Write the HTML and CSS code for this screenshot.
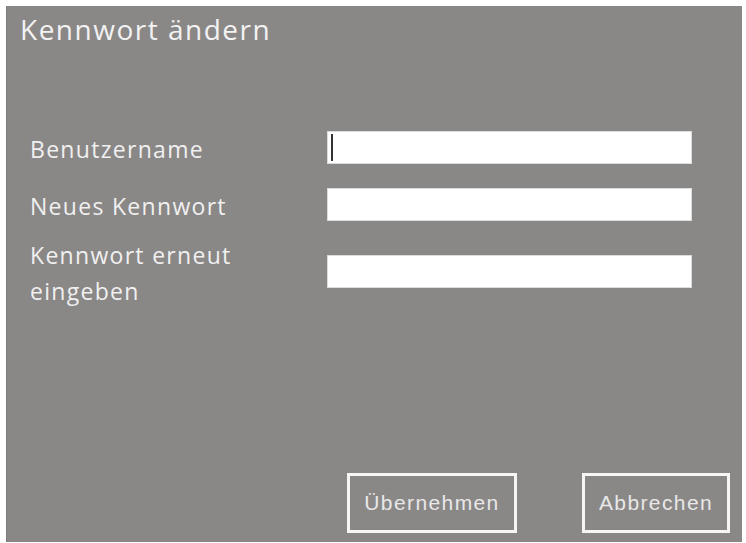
FILE: index.html
```html
<!DOCTYPE html>
<html lang="de">
<head>
    <meta charset="UTF-8">
    <meta name="viewport" content="width=device-width, initial-scale=1.0">
    <title>Kennwort ändern</title>
    <link rel="stylesheet" href="styles.css">
</head>
<body>
    <div class="dialog">
        <h1 class="title">Kennwort ändern</h1>
        <div class="form">
            <div class="row">
                <label class="label">Benutzername</label>
                <div class="field"><span class="caret"></span></div>
            </div>
            <div class="row">
                <label class="label">Neues Kennwort</label>
                <div class="field"></div>
            </div>
            <div class="row row-tall">
                <label class="label">Kennwort erneut<br>eingeben</label>
                <div class="field"></div>
            </div>
        </div>
        <div class="actions">
            <button class="btn btn-apply">Übernehmen</button>
            <button class="btn btn-cancel">Abbrechen</button>
        </div>
    </div>
</body>
</html>
```

FILE: styles.css
```css
body {
    margin: 0;
    background-color: #ffffff;
    font-family: "Open Sans", Lato, sans-serif;
}
.dialog {
    margin: 6px 0 0 6px;
    width: 736px;
    height: 536px;
    box-sizing: border-box;
    background-color: #8a8787;
    border-left: 1px solid #7d7a7a;
    display: flex;
    flex-direction: column;
}
.title {
    margin: 0;
    padding: 6px 0 0 13px;
    font-size: 28px;
    font-weight: normal;
    line-height: 34px;
    letter-spacing: 1.5px;
    color: #f2f2f2;
}
.form {
    margin-top: 82px;
    padding-left: 23px;
}
.row {
    display: flex;
    align-items: center;
}
.row + .row {
    margin-top: 18px;
}
.row + .row-tall {
    margin-top: 10px;
}
.label {
    width: 297px;
    font-size: 23px;
    line-height: 36px;
    letter-spacing: 1.3px;
    padding-top: 3px;
    color: #f0f0f0;
}
.field {
    width: 365px;
    height: 33px;
    box-sizing: border-box;
    background-color: #ffffff;
    border: 1px solid #dcdcdc;
    position: relative;
}
.caret {
    position: absolute;
    left: 3px;
    top: 2px;
    width: 2px;
    height: 27px;
    background-color: #333;
}
.actions {
    margin-top: auto;
    display: flex;
    justify-content: flex-end;
    gap: 65px;
    padding: 0 12px 9px 0;
}
.btn {
    height: 60px;
    box-sizing: border-box;
    background: transparent;
    border: 3px solid #f6f6f6;
    color: #e8e8e8;
    font-family: "Liberation Sans", Arial, sans-serif;
    font-size: 21px;
    letter-spacing: 1.4px;
    padding: 0;
}
.btn-apply {
    width: 170px;
}
.btn-cancel {
    width: 148px;
}
```
